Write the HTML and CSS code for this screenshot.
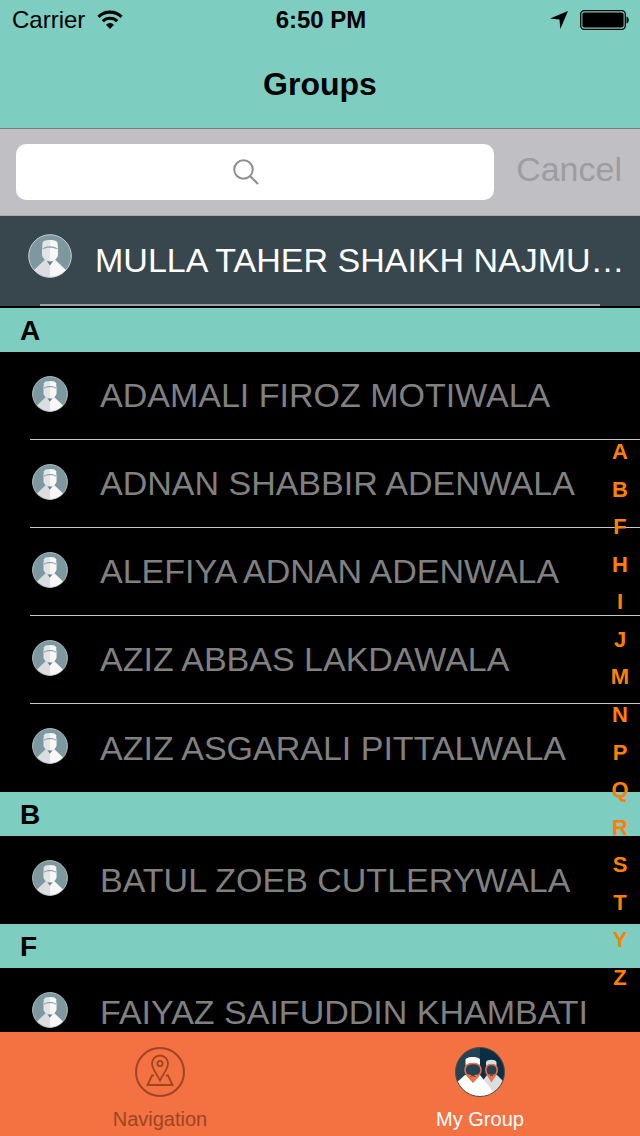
FILE: index.html
```html
<!DOCTYPE html>
<html lang="en">
<head>
    <meta charset="UTF-8">
    <meta name="viewport" content="width=device-width, initial-scale=1.0">
    <title>Groups</title>
    <link rel="stylesheet" href="styles.css">
</head>
<body>
    <!-- Shared icon shapes -->
    <svg class="sprite" aria-hidden="true">
        <symbol id="avatar" viewBox="0 0 44 44">
            <clipPath id="avatarClip"><circle cx="22" cy="22" r="21.3"/></clipPath>
            <circle cx="22" cy="22" r="21.3" fill="#7e989f"/>
            <g clip-path="url(#avatarClip)">
                <path d="M16.500 26L2 40v6h20V26z" fill="#dcdde0"/>
                <path d="M27.500 26L42 40v6H22V26z" fill="#f7f7f8"/>
                <path d="M18.500 26.500l3.500 5 3.500-5z" fill="#657f88"/>
                <path d="M22 6c-5 0-7 1-7.500 3L14 15v6c.5 3.500 4 6.500 8 6.500z" fill="#e3e4e6"/>
                <path d="M22 6c5 0 7 1 7.500 3l.5 6v6c-.5 3.500-4 6.500-8 6.500z" fill="#f7f7f8"/>
                <path d="M14.500 14.500c4-3 11-3 15 0v1c-4-2.200-11-2.200-15 0z" fill="#90a2a8"/>
            </g>
            <circle cx="22" cy="22" r="21.3" fill="none" stroke="#c3d0d4" stroke-width="1"/>
        </symbol>
    </svg>

    <div class="app">
        <header class="header">
            <div class="status-bar">
                <div class="status-left">
                    <span>Carrier</span>
                    <svg class="wifi" viewBox="0 0 26 20">
                        <g fill="none" stroke="#000" stroke-width="3.200">
                            <path d="M1.500 6.800a16.500 16.500 0 0 1 23 0"/>
                            <path d="M5.800 11.200a10.300 10.300 0 0 1 14.400 0"/>
                        </g>
                        <path d="M13 19l-4-4.300a5.600 5.600 0 0 1 8 0z"/>
                    </svg>
                </div>
                <span class="time">6:50 PM</span>
                <div class="status-right">
                    <svg class="location" viewBox="0 0 18 18"><path d="M18 0L10.300 18 9.500 8.400 0 7.600z"/></svg>
                    <svg class="battery" viewBox="0 0 50 20">
                        <rect x=".7" y=".7" width="44.600" height="18.600" rx="3.500" fill="none" stroke="#000" stroke-width="1.300"/>
                        <rect x="2.400" y="2.400" width="41.200" height="15.200" rx="2"/>
                        <path d="M46.500 6.500c3 1 3 6 0 7z"/>
                    </svg>
                </div>
            </div>
            <h1 class="title">Groups</h1>
        </header>

        <form class="search-bar">
            <label class="search-box">
                <input type="search" class="search-input" aria-label="Search">
                <svg class="search-icon" viewBox="0 0 26 26" fill="none" stroke="#8e8e93" stroke-width="2">
                    <circle cx="10.500" cy="10.500" r="9.300"/>
                    <path d="M17 17l8 8"/>
                </svg>
            </label>
            <button type="button" class="cancel-button" disabled>Cancel</button>
        </form>

        <div class="profile">
            <svg class="profile-avatar"><use href="#avatar"/></svg>
            <span class="profile-name">MULLA TAHER SHAIKH NAJMU…</span>
        </div>

        <main class="list-wrap">
            <div class="list">
                <section id="A">
                    <h2 class="section-title">A</h2>
                    <ul class="members">
                        <li class="member"><svg class="avatar"><use href="#avatar"/></svg><span class="name">ADAMALI FIROZ MOTIWALA</span></li>
                        <li class="member"><svg class="avatar"><use href="#avatar"/></svg><span class="name">ADNAN SHABBIR ADENWALA</span></li>
                        <li class="member"><svg class="avatar"><use href="#avatar"/></svg><span class="name">ALEFIYA ADNAN ADENWALA</span></li>
                        <li class="member"><svg class="avatar"><use href="#avatar"/></svg><span class="name">AZIZ ABBAS LAKDAWALA</span></li>
                        <li class="member"><svg class="avatar"><use href="#avatar"/></svg><span class="name">AZIZ ASGARALI PITTALWALA</span></li>
                    </ul>
                </section>
                <section id="B">
                    <h2 class="section-title">B</h2>
                    <ul class="members">
                        <li class="member"><svg class="avatar"><use href="#avatar"/></svg><span class="name">BATUL ZOEB CUTLERYWALA</span></li>
                    </ul>
                </section>
                <section id="F">
                    <h2 class="section-title">F</h2>
                    <ul class="members">
                        <li class="member"><svg class="avatar"><use href="#avatar"/></svg><span class="name">FAIYAZ SAIFUDDIN KHAMBATI</span></li>
                    </ul>
                </section>
            </div>

            <nav class="index" aria-label="Sections">
                <a href="#A">A</a>
                <a href="#B">B</a>
                <a href="#F">F</a>
                <a href="#H">H</a>
                <a href="#I">I</a>
                <a href="#J">J</a>
                <a href="#M">M</a>
                <a href="#N">N</a>
                <a href="#P">P</a>
                <a href="#Q">Q</a>
                <a href="#R">R</a>
                <a href="#S">S</a>
                <a href="#T">T</a>
                <a href="#Y">Y</a>
                <a href="#Z">Z</a>
            </nav>
        </main>

        <nav class="tab-bar">
            <a href="#navigation" class="tab">
                <svg class="tab-icon" viewBox="0 0 50 50" fill="none" stroke="#9c4522" stroke-width="2">
                    <circle cx="25" cy="25" r="24"/>
                    <path d="M25 33.500c-2.500-6-8-11-8-17a8 8 0 0 1 16 0c0 6-5.500 11-8 17z" stroke-width="1.800"/>
                    <circle cx="25" cy="16.500" r="2.600" stroke-width="1.800"/>
                    <path d="M19 28.500h-2L12.500 38h25L33 28.500h-2" stroke-width="1.800"/>
                </svg>
                <span>Navigation</span>
            </a>
            <a href="#group" class="tab active">
                <svg class="tab-icon" viewBox="0 0 50 50">
                    <clipPath id="groupClip"><circle cx="25" cy="25" r="24.500"/></clipPath>
                    <g clip-path="url(#groupClip)">
                        <path d="M0 0h25v50H0z" fill="#234354"/>
                        <path d="M25 0h25v50H25z" fill="#0b2f42"/>
                        <path d="M42 28l10 10v14H26V36l6-8z" fill="#dadde2"/>
                        <path d="M10 28L-1 38v14h41v-5L25 28z" fill="#fff"/>
                        <path d="M10.500 18.500v-6c1-3.500 13.500-3.500 14.500 0v6c-4-3.500-10.500-3.500-14.500 0z" fill="#fff"/>
                        <path d="M31 19v-4c1-3 9.500-3 10.500 0v4c-3-2.500-7.500-2.500-10.500 0z" fill="#dadde2"/>
                        <g fill="#234354" stroke="#f47142" stroke-width="1.500">
                            <path d="M18 16.500c5 0 8 2.500 8 6.500 0 5-4 7-8 12-4-5-8-7-8-12 0-4 3-6.500 8-6.500z"/>
                            <path d="M36.500 17.500c3.500 0 5.700 2 5.700 5.500 0 4-2.700 6-5.700 11-3-5-5.700-7-5.700-11 0-3.500 2.200-5.500 5.700-5.500z"/>
                        </g>
                        <path d="M12 27c4 1.500 8 1.500 12 0l-6 8zM32.500 27c3 1 5 1 8 0l-4 7z" fill="#f47142"/>
                        <path d="M15.500 29.500c1.500-1 3.500-1 5 0M35 29c1-.7 2-.7 3 0" stroke="#234354" fill="none"/>
                    </g>
                    <circle cx="25" cy="25" r="24.500" fill="none" stroke="#5a4540"/>
                </svg>
                <span>My Group</span>
            </a>
        </nav>
    </div>
</body>
</html>
```
FILE: styles.css
```css
* {
    margin: 0;
    padding: 0;
    box-sizing: border-box;
}
body {
    font-family: "Liberation Sans", Arial, sans-serif;
    background: #000;
    color: #000;
}
.sprite {
    position: absolute;
    width: 0;
    height: 0;
}
.app {
    display: flex;
    flex-direction: column;
    height: 100vh;
}
.header {
    background: #7dcdc0;
}
.status-bar {
    display: grid;
    grid-template-columns: 1fr auto 1fr;
    align-items: center;
    height: 40px;
    padding: 0 10px 0 12px;
    font-size: 24px;
}
.status-left,
.status-right {
    display: flex;
    align-items: center;
    gap: 12px;
}
.status-right {
    justify-content: flex-end;
}
.time {
    font-weight: bold;
}
.wifi {
    width: 26px;
    height: 20px;
}
.location {
    width: 18px;
    height: 18px;
}
.battery {
    width: 50px;
    height: 20px;
}
.title {
    font-size: 32px;
    line-height: 88px;
    text-align: center;
}
.search-bar {
    display: flex;
    align-items: center;
    gap: 22px;
    height: 88px;
    padding: 0 18px 0 16px;
    background: #c0bfc4;
    border-top: 1px solid #7c7b80;
    border-bottom: 1px solid #aaaaae;
}
.search-box {
    position: relative;
    flex: 1;
}
.search-input {
    display: block;
    width: 100%;
    height: 56px;
    padding: 0 16px;
    background: #fff;
    border: none;
    border-radius: 10px;
    font: inherit;
    font-size: 28px;
    outline: none;
}
.search-icon {
    position: absolute;
    top: 50%;
    left: 48%;
    width: 26px;
    height: 26px;
    transform: translate(-50%, -50%);
    pointer-events: none;
}
.cancel-button {
    height: 56px;
    padding-bottom: 6px;
    background: none;
    border: none;
    color: #9d9ca0;
    font: inherit;
    font-size: 34px;
}
.profile {
    position: relative;
    display: flex;
    align-items: center;
    gap: 23px;
    height: 92px;
    padding: 0 14px 2px 28px;
    background: #37474d;
    border-bottom: 2px solid #000;
    color: #fff;
    font-size: 34px;
}
.profile::after {
    content: "";
    position: absolute;
    right: 40px;
    bottom: 0;
    left: 40px;
    height: 2px;
    background: #98a2a6;
}
.profile-avatar {
    flex: none;
    width: 44px;
    height: 44px;
    margin-bottom: 8px;
}
.profile-name {
    flex: 1;
    overflow: hidden;
    white-space: nowrap;
    text-overflow: ellipsis;
}
.list-wrap {
    position: relative;
    flex: 1;
    min-height: 0;
}
.list {
    height: 100%;
    overflow-y: auto;
    scrollbar-width: none;
}
.section-title {
    height: 44px;
    padding-left: 20px;
    background: #7dcdc0;
    font-size: 28px;
    line-height: 46px;
}
.members {
    padding-left: 30px;
    list-style: none;
}
.member {
    display: flex;
    align-items: center;
    gap: 32px;
    height: 88px;
    padding-left: 2px;
    border-bottom: 1px solid #c8c7cc;
    color: #808080;
    font-size: 34px;
    white-space: nowrap;
}
.member:last-child {
    border-bottom: none;
}
.avatar {
    flex: none;
    width: 36px;
    height: 36px;
    margin-bottom: 4px;
}
.index {
    position: absolute;
    top: 132px;
    right: 0;
    bottom: 42px;
    display: flex;
    flex-direction: column;
    justify-content: space-between;
    width: 40px;
    text-align: center;
}
.index a {
    color: #ff8000;
    font-size: 22px;
    font-weight: bold;
    line-height: 24px;
    text-decoration: none;
}
.tab-bar {
    display: flex;
    height: 104px;
    background: #f47142;
}
.tab {
    flex: 1;
    display: flex;
    flex-direction: column;
    align-items: center;
    gap: 10px;
    padding-top: 15px;
    color: #9c4522;
    font-size: 20px;
    line-height: 24px;
    text-decoration: none;
}
.tab.active {
    color: #fff;
}
.tab-icon {
    width: 50px;
    height: 50px;
}
```
